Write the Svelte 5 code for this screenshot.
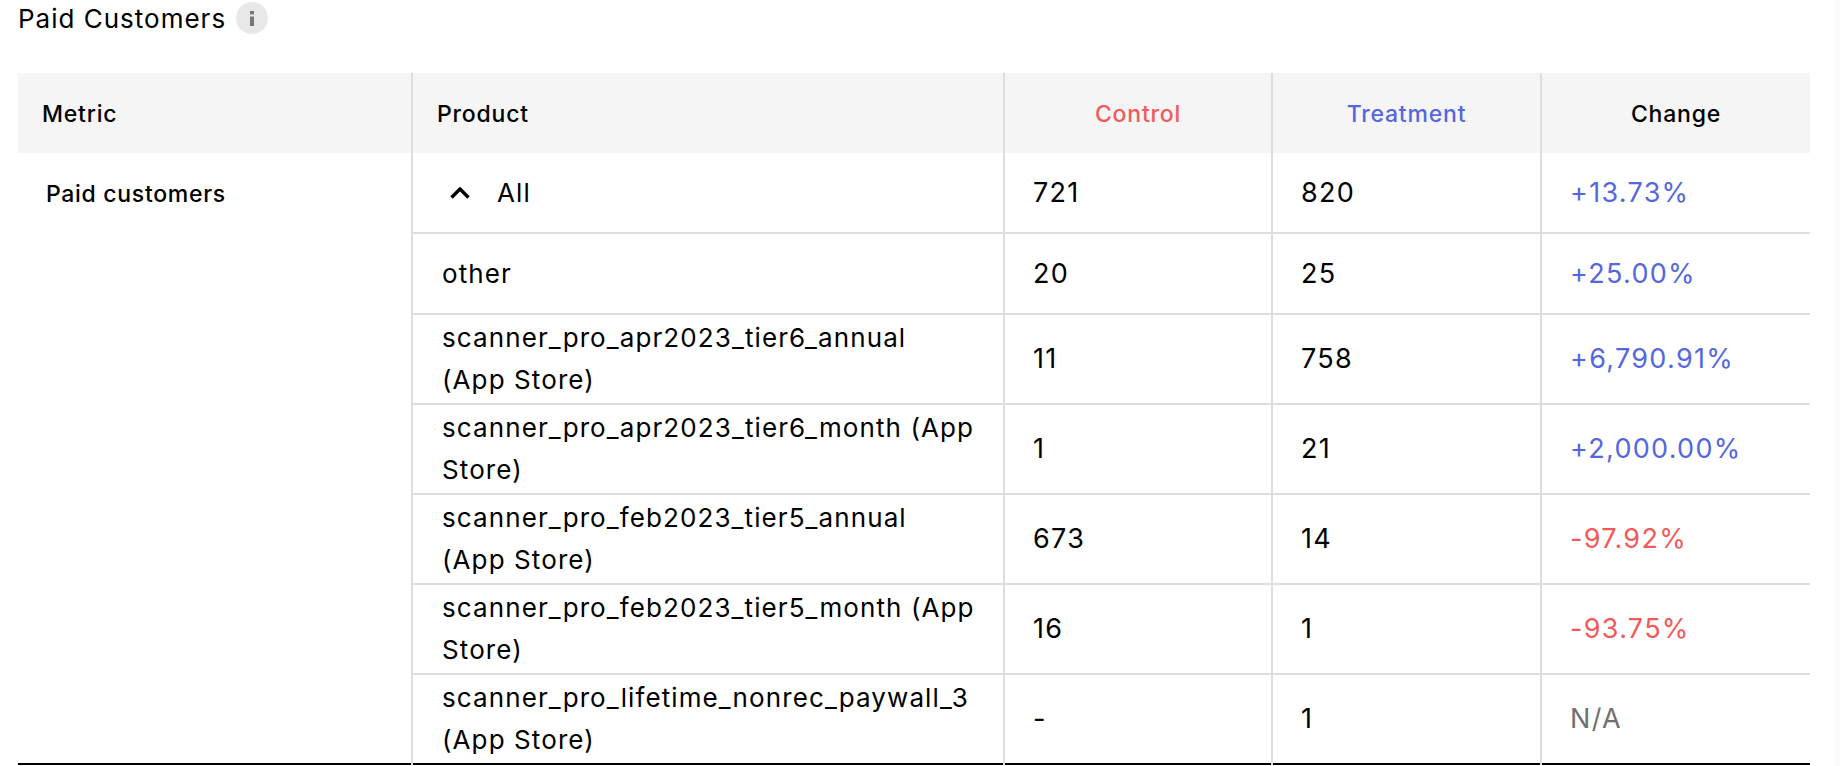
<script>
  const rows = [
    { product: 'All', expand: true, control: '721', treatment: '820', change: '+13.73%', tone: 'up' },
    { product: 'other', control: '20', treatment: '25', change: '+25.00%', tone: 'up' },
    { product: 'scanner_pro_apr2023_tier6_annual (App Store)', control: '11', treatment: '758', change: '+6,790.91%', tone: 'up' },
    { product: 'scanner_pro_apr2023_tier6_month (App Store)', control: '1', treatment: '21', change: '+2,000.00%', tone: 'up' },
    { product: 'scanner_pro_feb2023_tier5_annual (App Store)', control: '673', treatment: '14', change: '-97.92%', tone: 'down' },
    { product: 'scanner_pro_feb2023_tier5_month (App Store)', control: '16', treatment: '1', change: '-93.75%', tone: 'down' },
    { product: 'scanner_pro_lifetime_nonrec_paywall_3 (App Store)', control: '-', treatment: '1', change: 'N/A', tone: 'na' }
  ];
</script>

<div class="page">
  <div class="title">
    <span>Paid Customers</span>
    <svg class="info" width="32" height="32" viewBox="0 0 32 32" aria-hidden="true">
      <circle cx="16" cy="16" r="16" fill="#e8e8e8" />
      <rect x="14" y="9" width="4" height="3.4" fill="#777" />
      <rect x="14" y="14.5" width="4" height="9.5" fill="#777" />
    </svg>
  </div>

  <table>
    <colgroup>
      <col style="width: 394px" />
      <col style="width: 592px" />
      <col style="width: 268px" />
      <col style="width: 269px" />
      <col style="width: 269px" />
    </colgroup>
    <thead>
      <tr>
        <th class="metric-head">Metric</th>
        <th class="product-head">Product</th>
        <th class="center control">Control</th>
        <th class="center treatment">Treatment</th>
        <th class="center">Change</th>
      </tr>
    </thead>
    <tbody>
      {#each rows as row, i}
        <tr class:tall={i > 1}>
          {#if i === 0}
            <td class="metric" rowspan={rows.length}>Paid customers</td>
          {/if}
          <td class="product">
            {#if row.expand}
              <span class="all">
                <svg width="20" height="12" viewBox="0 0 20 12" aria-hidden="true">
                  <path d="M1.5 10.5 L10 2 L18.5 10.5" fill="none" stroke="#000" stroke-width="3.4" />
                </svg>
                {row.product}
              </span>
            {:else}
              {row.product}
            {/if}
          </td>
          <td class="num">{row.control}</td>
          <td class="num">{row.treatment}</td>
          <td class="num {row.tone}">{row.change}</td>
        </tr>
      {/each}
    </tbody>
  </table>
  <div class="scroll-edge"></div>
</div>

<style>
  :global(body) {
    margin: 0;
    background: #fff;
    font-family: Inter, "Liberation Sans", sans-serif;
    color: #000;
  }

  .page {
    position: relative;
    width: 1840px;
    height: 766px;
    box-sizing: border-box;
    padding-left: 18px;
    overflow: hidden;
  }

  .scroll-edge {
    position: absolute;
    top: 0;
    right: 0;
    bottom: 0;
    width: 6px;
    background: #fafafa;
  }

  .title {
    display: flex;
    align-items: center;
    gap: 10px;
    height: 36px;
    margin-bottom: 37px;
    font-size: 26px;
    letter-spacing: 1px;
  }

  table {
    width: 1792px;
    table-layout: fixed;
    border-collapse: collapse;
    font-size: 26px;
    letter-spacing: 1.1px;
    line-height: 42px;
    border-bottom: 2px solid #000;
  }

  th {
    height: 79px;
    padding: 1px 0 0 24px;
    background: #f5f5f5;
    font-size: 23px;
    letter-spacing: 0.8px;
    font-weight: 450;
    text-align: left;
    border-left: 2px solid #dedede;
  }

  th:first-child,
  td.metric {
    border-left: 0;
  }

  th.center {
    padding-left: 0;
    text-align: center;
  }

  .control {
    color: #f25a5a;
  }

  .treatment {
    color: #5567de;
  }

  td {
    height: 79px;
    padding: 0 10px 0 29px;
    border-left: 2px solid #dedede;
    border-bottom: 2px solid #dedede;
    vertical-align: middle;
  }

  tr:last-child td {
    border-bottom: 0;
  }

  tr.tall td {
    height: 88px;
  }

  td.metric {
    padding: 20px 0 0 28px;
    vertical-align: top;
    font-size: 23px;
    letter-spacing: 0.7px;
    font-weight: 450;
    border-bottom: 0;
  }

  td.num {
    padding-left: 28px;
    font-size: 27px;
    letter-spacing: 1.3px;
  }

  td.product {
    padding-left: 29px;
    padding-right: 28px;
  }

  .all {
    display: flex;
    align-items: center;
    gap: 27px;
    margin-left: 8px;
  }

  .up {
    color: #5567de;
  }

  .down {
    color: #f25a5a;
  }

  .na {
    color: #707070;
  }
</style>
